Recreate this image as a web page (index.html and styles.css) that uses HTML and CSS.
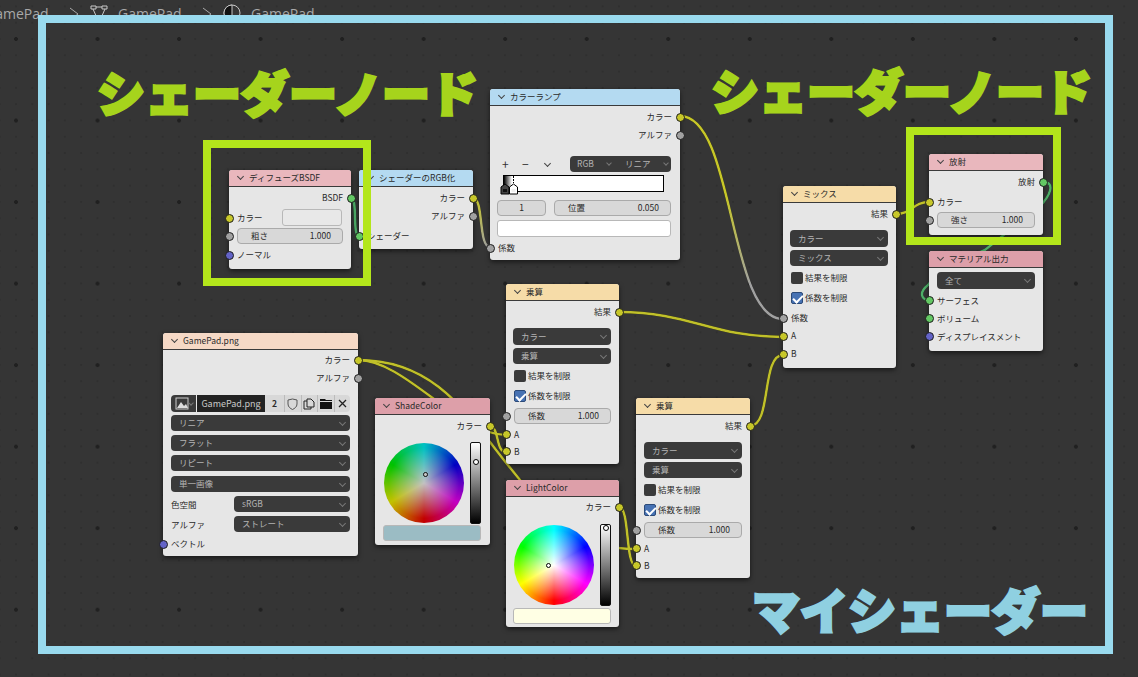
FILE: index.html
```html
<!DOCTYPE html>
<html lang="ja">
<head>
<meta charset="UTF-8">
<meta name="viewport" content="width=device-width, initial-scale=1.0">
<title>マイシェーダー</title>
<link rel="stylesheet" href="styles.css">
</head>
<body>
<div class="canvas">

  <div class="crumbs">
    <span class="crumb-first">GamePad</span>
    <svg class="crumb-sep" width="12" height="16" viewBox="0 0 12 16"><path d="M2 3l8 6-8 6"/></svg>
    <svg class="crumb-icon" width="18" height="18" viewBox="0 0 18 18"><path d="M1 2h5v3H1zM12 2h5v3h-5zM6 3h6M3 5l4 9M15 5l-4 9M6 14h6v3H6z"/></svg>
    <span>GamePad</span>
    <svg class="crumb-sep" width="12" height="16" viewBox="0 0 12 16"><path d="M2 3l8 6-8 6"/></svg>
    <svg class="crumb-icon" width="18" height="18" viewBox="0 0 18 18"><circle cx="9" cy="9" r="8"/><path class="fill" d="M9 1a8 8 0 0 0 0 16z"/></svg>
    <span>GamePad</span>
  </div>

  <!-- ワイヤー -->
  <svg class="wires" width="1138" height="677" viewBox="0 0 1138 677">
    <defs>
      <linearGradient id="yellowGray" gradientUnits="userSpaceOnUse" x1="680" y1="116" x2="783" y2="319">
        <stop offset="0" stop-color="#c7c729"/><stop offset="0.4" stop-color="#c7c729"/><stop offset="0.8" stop-color="#a1a1a1"/>
      </linearGradient>
      <linearGradient id="yellowGray2" gradientUnits="userSpaceOnUse" x1="473" y1="198" x2="490" y2="247">
        <stop offset="0" stop-color="#c7c729"/><stop offset="1" stop-color="#a1a1a1"/>
      </linearGradient>
    </defs>
    <path class="wire green" d="M351 198C358 198 352 236 359 236"/>
    <path class="wire" stroke="url(#yellowGray2)" d="M473 198C484 198 478 247 490 247"/>
    <path class="wire" stroke="url(#yellowGray)" d="M680 116C735 116 728 319 783 319"/>
    <path class="wire yellow" d="M619 312C690 312 712 337 783 337"/>
    <path class="wire yellow" d="M750 426C772 426 761 355 783 355"/>
    <path class="wire yellow" d="M896 214C912 214 913 202 929 202"/>
    <path class="wire yellow" d="M358 360C405 360 459 435 506 435"/>
    <path class="wire yellow" d="M358 360C440 360 470 420 520 480C560 525 580 549 636 549"/>
    <path class="wire yellow" d="M489 426C500 426 495 452 506 452"/>
    <path class="wire yellow" d="M619 507C630 507 625 566 636 566"/>
    <path class="wire green" d="M1043 182C1056 182 1050 196 1040 206L985 250L940 270L928 285C918 293 922 300 929 300"/>
  </svg>

  <!-- ディフューズBSDF -->
  <div class="node n-diffuse">
    <div class="head h-shader"><i class="chev"></i>ディフューズBSDF</div>
    <div class="body">
      <div class="row out">BSDF<b class="sock r green"></b></div>
      <div class="row mt2"><b class="sock l yellow"></b><span class="half">カラー</span><span class="swatch s-white"></span></div>
      <div class="row"><b class="sock l gray"></b><div class="field"><span>粗さ</span><span>1.000</span></div></div>
      <div class="row mt1"><b class="sock l purple"></b>ノーマル</div>
    </div>
  </div>

  <!-- シェーダーのRGB化 -->
  <div class="node n-torgb">
    <div class="head h-conv"><i class="chev"></i>シェーダーのRGB化</div>
    <div class="body">
      <div class="row out">カラー<b class="sock r yellow"></b></div>
      <div class="row out">アルファ<b class="sock r gray"></b></div>
      <div class="row mt2"><b class="sock l green"></b>シェーダー</div>
    </div>
  </div>

  <!-- カラーランプ -->
  <div class="node n-ramp">
    <div class="head h-conv"><i class="chev"></i>カラーランプ</div>
    <div class="body">
      <div class="row out">カラー<b class="sock r yellow"></b></div>
      <div class="row out">アルファ<b class="sock r gray"></b></div>
      <div class="ramp-tools">
        <span class="tool">+</span><span class="tool">−</span><i class="chev tool-chev"></i>
        <div class="pill"><span>RGB</span><i class="chev light"></i><span>リニア</span><i class="chev light"></i></div>
      </div>
      <div class="ramp-bar">
        <svg class="ramp-stops" width="18" height="20" viewBox="0 0 18 20">
          <path d="M13.500 1v7" stroke="#000" stroke-dasharray="2 1"/>
          <path d="M1 12l4-3 4 3v7H1z" fill="#444" stroke="#000"/>
          <rect x="3" y="14" width="4" height="3" fill="#111"/>
          <path d="M9.500 12l4-3 4 3v7h-8z" fill="#fff" stroke="#000"/>
          <rect x="11.500" y="14" width="4" height="3" fill="#eee"/>
        </svg>
      </div>
      <div class="ramp-fields">
        <div class="field one"><span>1</span></div>
        <div class="field"><span>位置</span><span>0.050</span></div>
      </div>
      <span class="swatch s-ramp"></span>
      <div class="row mt2"><b class="sock l gray"></b>係数</div>
    </div>
  </div>

  <!-- GamePad.png -->
  <div class="node n-image">
    <div class="head h-input"><i class="chev"></i>GamePad.png</div>
    <div class="body tight">
      <div class="row out">カラー<b class="sock r yellow"></b></div>
      <div class="row out">アルファ<b class="sock r gray"></b></div>
      <div class="img-bar">
        <span class="img-pick">
          <svg width="14" height="13" viewBox="0 0 14 13"><rect x="1" y="1" width="12" height="11" fill="none" stroke="#ccc"/><path d="M2 11l4-6 3 4 2-2 2 4z" fill="#ddd"/></svg>
          <i class="chev light"></i>
        </span>
        <span class="img-name">GamePad.png</span>
        <span class="img-btn num">2</span>
        <span class="img-btn"><svg width="11" height="12" viewBox="0 0 11 12"><path d="M1 2l4.500-1L10 2v4c0 3-2.500 4.500-4.500 5.500C3.500 10.500 1 9 1 6z" fill="none" stroke="#555"/></svg></span>
        <span class="img-btn"><svg width="12" height="12" viewBox="0 0 12 12"><path d="M4 1h4l3 3v5H4zM4 3H1v8h7V9" fill="none" stroke="#222"/></svg></span>
        <span class="img-btn"><svg width="12" height="11" viewBox="0 0 12 11"><path d="M0 1h5l1 1h6v1H0zM0 4h12v7H0z" fill="#111"/></svg></span>
        <span class="img-btn last"><svg width="9" height="9" viewBox="0 0 9 9"><path d="M1 1l7 7M8 1l-7 7" stroke="#222" stroke-width="1.300"/></svg></span>
      </div>
      <div class="select w-full mt3"><span>リニア</span></div>
      <div class="select w-full mt4"><span>フラット</span></div>
      <div class="select w-full mt4"><span>リピート</span></div>
      <div class="select w-full mt5"><span>単一画像</span></div>
      <div class="prop mt4"><label>色空間</label><div class="select"><span>sRGB</span></div></div>
      <div class="prop mt4"><label>アルファ</label><div class="select"><span>ストレート</span></div></div>
      <div class="row mt3"><b class="sock l purple"></b>ベクトル</div>
    </div>
  </div>

  <!-- ShadeColor -->
  <div class="node n-shade">
    <div class="head h-rgb"><i class="chev"></i>ShadeColor</div>
    <div class="body">
      <div class="row out">カラー<b class="sock r yellow"></b></div>
      <div class="picker">
        <div class="wheel dim"><i class="cursor c-shade"></i></div>
        <div class="value"><i class="value-dot d-shade"></i></div>
      </div>
      <span class="swatch s-shade"></span>
    </div>
  </div>

  <!-- LightColor -->
  <div class="node n-light">
    <div class="head h-rgb"><i class="chev"></i>LightColor</div>
    <div class="body tight">
      <div class="row out">カラー<b class="sock r yellow"></b></div>
      <div class="picker">
        <div class="wheel"><i class="cursor c-light"></i></div>
        <div class="value"><i class="value-dot d-light"></i></div>
      </div>
      <span class="swatch s-light"></span>
    </div>
  </div>

  <!-- 乗算 1 -->
  <div class="node n-mul1">
    <div class="head h-mix"><i class="chev"></i>乗算</div>
    <div class="body">
      <div class="row out">結果<b class="sock r yellow"></b></div>
      <div class="select w-full mt7"><span>カラー</span></div>
      <div class="select w-full mt3"><span>乗算</span></div>
      <div class="row mt3"><i class="check"></i>結果を制限</div>
      <div class="row mt2"><i class="check on"></i>係数を制限</div>
      <div class="row field-row mt3"><b class="sock l gray"></b><div class="field"><span>係数</span><span>1.000</span></div></div>
      <div class="row short mt2"><b class="sock l yellow"></b>A</div>
      <div class="row short"><b class="sock l yellow"></b>B</div>
    </div>
  </div>

  <!-- 乗算 2 -->
  <div class="node n-mul2">
    <div class="head h-mix"><i class="chev"></i>乗算</div>
    <div class="body">
      <div class="row out">結果<b class="sock r yellow"></b></div>
      <div class="select w-full mt7"><span>カラー</span></div>
      <div class="select w-full mt3"><span>乗算</span></div>
      <div class="row mt3"><i class="check"></i>結果を制限</div>
      <div class="row mt2"><i class="check on"></i>係数を制限</div>
      <div class="row field-row mt3"><b class="sock l gray"></b><div class="field"><span>係数</span><span>1.000</span></div></div>
      <div class="row short mt2"><b class="sock l yellow"></b>A</div>
      <div class="row short"><b class="sock l yellow"></b>B</div>
    </div>
  </div>

  <!-- ミックス -->
  <div class="node n-mix">
    <div class="head h-mix"><i class="chev"></i>ミックス</div>
    <div class="body">
      <div class="row out">結果<b class="sock r yellow"></b></div>
      <div class="select w-full mt7"><span>カラー</span></div>
      <div class="select w-full mt3"><span>ミックス</span></div>
      <div class="row mt3"><i class="check"></i>結果を制限</div>
      <div class="row mt2"><i class="check on"></i>係数を制限</div>
      <div class="row mt2"><b class="sock l gray"></b>係数</div>
      <div class="row"><b class="sock l yellow"></b>A</div>
      <div class="row"><b class="sock l yellow"></b>B</div>
    </div>
  </div>

  <!-- 放射 -->
  <div class="node n-emit">
    <div class="head h-shader"><i class="chev"></i>放射</div>
    <div class="body">
      <div class="row out">放射<b class="sock r green"></b></div>
      <div class="row mt2"><b class="sock l yellow"></b>カラー</div>
      <div class="row field-row mt1"><b class="sock l gray"></b><div class="field"><span>強さ</span><span>1.000</span></div></div>
    </div>
  </div>

  <!-- マテリアル出力 -->
  <div class="node n-output">
    <div class="head h-rgb"><i class="chev"></i>マテリアル出力</div>
    <div class="body">
      <div class="select w-full mt2"><span>全て</span></div>
      <div class="row mt3"><b class="sock l green"></b>サーフェス</div>
      <div class="row"><b class="sock l green"></b>ボリューム</div>
      <div class="row"><b class="sock l purple"></b>ディスプレイスメント</div>
    </div>
  </div>

  <div class="frame f-main"></div>
  <div class="frame lime f-diffuse"></div>
  <div class="frame lime f-emit"></div>

  <div class="title t-left">シェーダーノード</div>
  <div class="title t-right">シェーダーノード</div>
  <div class="title blue t-mine">マイシェーダー</div>
</div>
</body>
</html>
```

FILE: styles.css
```css
* {
  box-sizing: border-box;
}
body {
  margin: 0;
  font-family: "Noto Sans CJK JP", "Noto Sans", sans-serif;
  background-color: #333;
}
.canvas {
  position: relative;
  width: 1138px;
  height: 677px;
  overflow: hidden;
  background-color: #353535;
  background-image:
    radial-gradient(circle at 2px 2px, #202020 1.8px, transparent 2.2px),
    radial-gradient(circle at 1px 1px, #2f2f2f 0.7px, transparent 1.1px);
  background-size: 81.54px 81.54px, 16.31px 16.31px;
  background-position: 14px 37px, 15px 38px;
}

/* パンくず */
.crumbs {
  display: flex;
  align-items: center;
  height: 26px;
  margin-left: -15px;
  color: #a8a8a8;
  font-family: "Open Sans", sans-serif;
  font-size: 14px;
}
.crumbs span {
  flex: none;
  width: 63px;
}
.crumb-sep {
  flex: none;
  margin: 0 6px 0 20px;
  fill: none;
  stroke: #a8a8a8;
}
.crumb-icon {
  flex: none;
  margin: 0 10px 0 4px;
  fill: none;
  stroke: #c8c8c8;
}
.crumb-icon .fill {
  fill: #111;
}

.wires {
  position: absolute;
  left: 0;
  top: 0;
  fill: none;
  filter: drop-shadow(0 0 0.7px #000);
}
.wire {
  stroke-width: 2.500;
}
.wire.yellow {
  stroke: #c0c02a;
}
.wire.green {
  stroke: #4fae68;
}

/* ノード */
.node {
  position: absolute;
  background: #e6e6e6;
  border-radius: 3px;
  box-shadow: 0 2px 5px rgba(0, 0, 0, 0.55);
  color: #2a2a2a;
  font-size: 8.500px;
  line-height: 1;
}
.n-diffuse { left: 229px; top: 170px; width: 122px; height: 99px; }
.n-torgb { left: 359px; top: 170px; width: 114px; height: 79px; }
.n-ramp { left: 490px; top: 89px; width: 190px; height: 171px; }
.n-image { left: 163px; top: 333px; width: 195px; height: 223px; }
.n-shade { left: 375px; top: 398px; width: 115px; height: 147px; }
.n-light { left: 506px; top: 480px; width: 113px; height: 147px; }
.n-mul1 { left: 506px; top: 284px; width: 113px; height: 180px; }
.n-mul2 { left: 636px; top: 398px; width: 114px; height: 180px; }
.n-mix { left: 783px; top: 186px; width: 113px; height: 182px; }
.n-emit { left: 929px; top: 154px; width: 114px; height: 81px; }
.n-output { left: 929px; top: 251px; width: 114px; height: 100px; }

.head {
  display: flex;
  align-items: center;
  height: 17px;
  padding-left: 8px;
  padding-bottom: 1px;
  border-bottom: 1px solid #3a3a3a;
  border-radius: 3px 3px 0 0;
  font-size: 8.500px;
}
.h-shader { background: #e9b7bd; }
.h-rgb { background: #dd9fa9; }
.h-conv { background: #b4daf1; }
.h-input { background: #f6d9c6; }
.h-mix { background: #f6dca8; }

.chev {
  display: inline-block;
  flex: none;
  width: 5px;
  height: 5px;
  margin: -2px 6px 0 1px;
  border-right: 1px solid #444;
  border-bottom: 1px solid #444;
  transform: rotate(45deg);
}
.chev.light {
  width: 4px;
  height: 4px;
  border-color: #777;
  margin: -2px 0 0 0;
}

.body {
  display: flex;
  flex-direction: column;
  padding-top: 2px;
}
.body.tight {
  padding-top: 1px;
}
.row {
  position: relative;
  display: flex;
  align-items: center;
  flex: none;
  height: 18px;
  padding: 0 8px 1px;
}
.row.out {
  justify-content: flex-end;
}
.row.short {
  height: 17px;
}
.row.field-row {
  height: 16px;
  padding-bottom: 0;
}
.half {
  width: 45px;
}
.mt1 { margin-top: 1px; }
.mt2 { margin-top: 2px; }
.mt3 { margin-top: 3px; }
.mt4 { margin-top: 4px; }
.mt5 { margin-top: 5px; }
.mt7 { margin-top: 7px; }

.sock {
  position: absolute;
  top: 50%;
  width: 9px;
  height: 9px;
  margin-top: -4.500px;
  border: 1px solid #1d1d1d;
  border-radius: 50%;
}
.sock.l { left: -4.500px; }
.sock.r { right: -4.500px; }
.sock.yellow { background: #c7c729; }
.sock.gray { background: #a1a1a1; }
.sock.green { background: #63c763; }
.sock.purple { background: #6363c7; }

.field {
  display: flex;
  align-items: center;
  justify-content: space-between;
  flex: 1;
  height: 16px;
  padding: 0 11px 1px 13px;
  background: #d8d8d8;
  border: 1px solid #aaa;
  border-radius: 4px;
}
.field.one {
  justify-content: center;
  flex: 0 0 49px;
  padding: 0 0 1px;
}
.swatch {
  display: block;
  border: 1px solid #b8b8b8;
  border-radius: 3px;
}
.s-white {
  width: 60px;
  height: 17px;
  margin-left: auto;
  margin-right: 1px;
  background: #e8e8e8;
}
.s-ramp {
  height: 17px;
  margin: 4px 9px 0 7px;
  background: #fff;
}
.s-shade {
  height: 16px;
  margin: 1px 9px 0 8px;
  background: #9bbcc4;
}
.s-light {
  height: 16px;
  margin: 2px 8px 0 7px;
  background: #ffffe4;
}

.select {
  position: relative;
  display: flex;
  align-items: center;
  flex: 1;
  height: 16.500px;
  padding: 0 0 1px 8px;
  background: #3a3a3a;
  border-radius: 4px;
  color: #b4b4b4;
}
.n-image .select {
  height: 16px;
}
.select::after {
  content: "";
  position: absolute;
  right: 5px;
  top: 5px;
  width: 4px;
  height: 4px;
  border-right: 1px solid #777;
  border-bottom: 1px solid #777;
  transform: rotate(45deg);
}
.select.w-full {
  flex: none;
  margin-left: 8px;
  margin-right: 8px;
}
.n-mul1 .select.w-full,
.n-mix .select.w-full {
  margin-left: 7px;
}
.prop {
  display: flex;
  align-items: center;
  flex: none;
  margin-left: 8px;
  margin-right: 8px;
}
.prop label {
  width: 63px;
  flex: none;
}

.check {
  flex: none;
  width: 12px;
  height: 12px;
  margin-right: 2px;
  background: #3a3a3a;
  border-radius: 2px;
}
.check.on {
  position: relative;
  background: #4772b3;
  border: 1px solid #2c4a78;
}
.check.on::after {
  content: "";
  position: absolute;
  left: 3px;
  top: 0;
  width: 4px;
  height: 8px;
  border-right: 2px solid #fff;
  border-bottom: 2px solid #fff;
  transform: rotate(45deg);
}

/* カラーランプ */
.ramp-tools {
  display: flex;
  align-items: center;
  height: 16px;
  margin-top: 12px;
  padding: 0 9px 0 12px;
}
.tool {
  width: 20px;
  font-size: 12px;
  color: #333;
}
.tool-chev {
  margin: -2px 0 0 3px;
}
.pill {
  display: flex;
  align-items: center;
  justify-content: space-between;
  width: 101px;
  height: 16px;
  margin-left: auto;
  padding: 0 3px 1px 7px;
  background: #3a3a3a;
  border-radius: 4px;
  color: #b4b4b4;
}
.ramp-bar {
  position: relative;
  width: 161px;
  height: 17px;
  margin: 3px 0 0 13px;
  background: linear-gradient(90deg, #000, #fff 5%);
  border: 1px solid #000;
}
.ramp-stops {
  position: absolute;
  left: -4px;
  top: -1px;
}
.ramp-fields {
  display: flex;
  gap: 8px;
  margin: 8px 9px 0 7px;
}

/* 画像テクスチャ */
.img-bar {
  display: flex;
  height: 17px;
  margin: 8px 8px 0;
}
.img-pick {
  display: flex;
  align-items: center;
  justify-content: space-between;
  width: 25px;
  padding: 0 3px 0 4px;
  background: #3a3a3a;
  border-radius: 4px 0 0 4px;
}
.img-name {
  display: flex;
  align-items: center;
  justify-content: center;
  width: 68px;
  margin-left: 1px;
  background: #222;
  color: #c8c8c8;
  font-size: 9px;
}
.img-btn {
  display: flex;
  align-items: center;
  justify-content: center;
  flex: 1;
  background: #d8d8d8;
  border-right: 1px solid #bbb;
}
.img-btn.num {
  flex: 0 0 20px;
  font-weight: 700;
}
.img-btn.last {
  border-right: 0;
  border-radius: 0 4px 4px 0;
}

/* カラーホイール */
.picker {
  display: flex;
  justify-content: space-between;
  height: 82px;
  margin-top: 7px;
  padding: 0 9px;
}
.n-light .picker {
  margin-top: 8px;
  padding: 0 8px;
}
.wheel {
  position: relative;
  width: 80px;
  height: 80px;
  margin-top: 1px;
  border-radius: 50%;
  background:
    radial-gradient(closest-side, #fff, rgba(255, 255, 255, 0) 88%),
    conic-gradient(from 180deg, #f00, #ff0, #0f0, #0ff, #00f, #f0f, #f00);
}
.wheel.dim {
  filter: brightness(0.76);
}
.cursor {
  position: absolute;
  width: 5px;
  height: 5px;
  background: #fff;
  border: 1px solid #000;
  border-radius: 50%;
}
.c-shade { left: 39px; top: 29px; filter: brightness(1.35); }
.c-light { left: 32px; top: 38px; }
.value {
  position: relative;
  width: 11px;
  background: linear-gradient(#fff, #000);
  border: 1px solid #111;
  border-radius: 2px;
}
.value-dot {
  position: absolute;
  left: 1.500px;
  width: 6px;
  height: 6px;
  background: #fff;
  border: 1px solid #000;
  border-radius: 50%;
}
.d-shade { top: 16px; }
.d-light { top: 0; }

/* フレーム */
.frame {
  position: absolute;
  border: 8px solid #99daee;
}
.frame.lime {
  border-color: #b3e61b;
}
.f-main { left: 38px; top: 15px; width: 1075px; height: 639px; }
.f-diffuse { left: 203px; top: 140px; width: 168px; height: 146px; }
.f-emit { left: 906px; top: 127px; width: 155px; height: 118px; }

/* 見出し */
.title {
  position: absolute;
  color: #a6d41c;
  font-size: 48px;
  font-weight: 900;
  line-height: 48px;
  white-space: nowrap;
  -webkit-text-stroke: 3px currentColor;
}
.title.blue {
  color: #8fd0e1;
}
.t-left { left: 97px; top: 67px; }
.t-right { left: 711px; top: 65px; }
.t-mine { left: 752px; top: 584px; }
```
